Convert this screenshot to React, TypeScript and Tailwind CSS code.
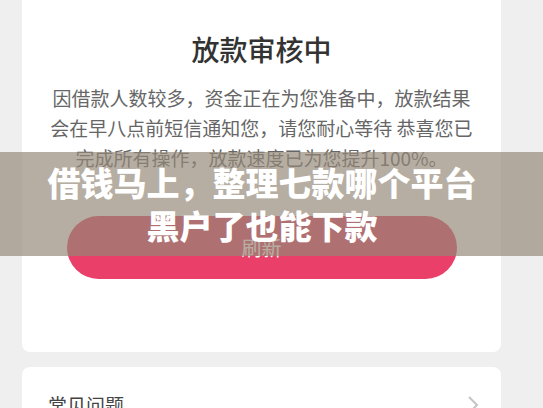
const font = { fontFamily: '"Noto Sans CJK SC", "Noto Sans", sans-serif' };

const ReviewCard = () => {
  return (
    <div className="ml-[22px] w-[479px] bg-white rounded-b-lg pt-[29px] pb-[73px] flex flex-col items-center">
      <h2 className="text-[28px] leading-[40px] font-medium text-[#333333]">放款审核中</h2>
      <p className="mt-[14px] text-[19px] leading-[30px] text-[#666666] text-center">
        因借款人数较多，资金正在为您准备中，放款结果
        <br />
        会在早八点前短信通知您，请您耐心等待 恭喜您已
        <br />
        完成所有操作，放款速度已为您提升100%。
      </p>
      <button className="mt-[43px] w-[390px] h-[63px] rounded-full bg-[#ea3f68] text-white text-[20px]">
        刷新
      </button>
    </div>
  );
};

const FaqRow = () => {
  return (
    <div className="ml-[22px] w-[479px] mt-[15px] bg-white rounded-t-lg pt-[24px] pl-[26px] pr-[22px] pb-[24px] flex items-center justify-between">
      <span className="text-[19px] leading-[28px] text-[#444444]">常见问题</span>
      <svg width="12" height="20" viewBox="0 0 12 20" fill="none" stroke="#c4c4c4" strokeWidth="2">
        <path d="M2 2l8 8-8 8" />
      </svg>
    </div>
  );
};

export default function App() {
  return (
    <div className="relative h-[408px] w-[543px] overflow-hidden bg-[#efefef]" style={font}>
      <ReviewCard />
      <FaqRow />
      {/* caption band laid over the page */}
      <div className="absolute left-0 right-0 top-[152px] h-[104px] pr-[19px] bg-[rgba(148,136,120,0.68)] flex flex-col items-center justify-center">
        <p className="text-white font-black text-[33px] leading-[43px]">借钱马上，整理七款哪个平台</p>
        <p className="text-white font-black text-[33px] leading-[43px]">黑户了也能下款</p>
      </div>
    </div>
  );
}
